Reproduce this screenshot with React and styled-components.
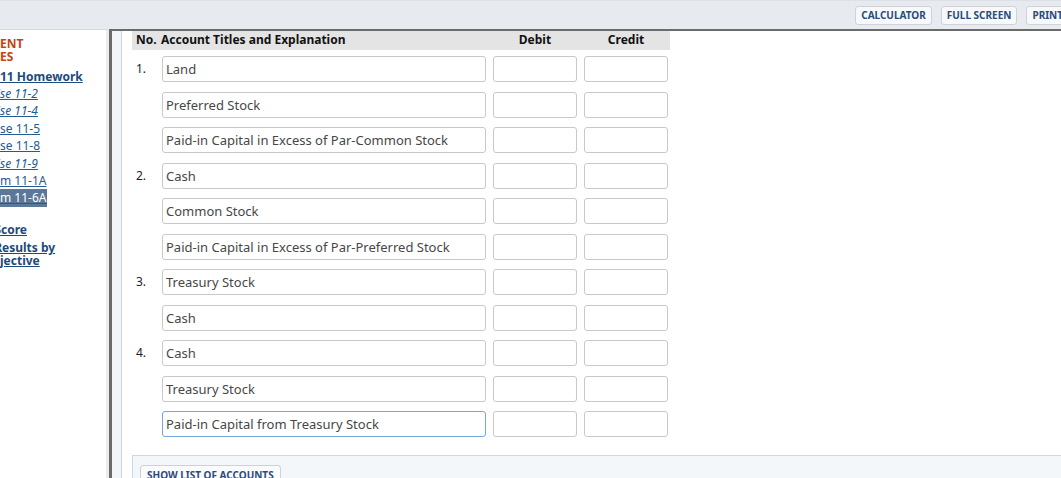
import React from "react";
import styled, { createGlobalStyle } from "styled-components";

const GlobalStyle = createGlobalStyle`
  html, body {
    margin: 0;
    overflow: hidden;
    background: #ffffff;
    font-family: "Noto Sans", "DejaVu Sans", sans-serif;
  }
  * { box-sizing: border-box; }
`;

const entries = [
  { no: "1.", lines: ["Land", "Preferred Stock", "Paid-in Capital in Excess of Par-Common Stock"] },
  { no: "2.", lines: ["Cash", "Common Stock", "Paid-in Capital in Excess of Par-Preferred Stock"] },
  { no: "3.", lines: ["Treasury Stock", "Cash"] },
  { no: "4.", lines: ["Cash", "Treasury Stock", "Paid-in Capital from Treasury Stock"] },
];

const links = [
  { hidden: "Exerci", shown: "se 11-2", italic: true },
  { hidden: "Exerci", shown: "se 11-4", italic: true },
  { hidden: "Exerci", shown: "se 11-5" },
  { hidden: "Exerci", shown: "se 11-8" },
  { hidden: "Exerci", shown: "se 11-9", italic: true },
  { hidden: "Proble", shown: "m 11-1A" },
  { hidden: "Proble", shown: "m 11-6A", active: true },
];

// a sidebar line scrolled sideways: the hidden start of the text hangs off the left edge
function Cut({ hidden, shift, children }) {
  return (
    <CutLine $shift={shift}>
      <Hidden><span>{hidden}</span></Hidden>
      {children}
    </CutLine>
  );
}

export default function App() {
  const last = entries.length - 1;
  return (
    <>
      <GlobalStyle />
      <Page>
        <TopBar>
          <ToolButton>CALCULATOR</ToolButton>
          <ToolButton>FULL SCREEN</ToolButton>
          <ToolButton>PRINT</ToolButton>
        </TopBar>
        <Body>
          <Sidebar>
            <Heading>
              <Cut hidden="ASSIGNM">ENT</Cut>
              <Cut hidden="RESOURC">ES</Cut>
            </Heading>
            <BoldLink>
              <Cut hidden="Chapter ">11 Homework</Cut>
            </BoldLink>
            <LinkList>
              {links.map((l) => (
                <SubLink key={l.shown} $italic={l.italic}>
                  <Cut hidden={l.hidden}>
                    <LinkText $active={l.active}>{l.shown}</LinkText>
                  </Cut>
                </SubLink>
              ))}
            </LinkList>
            <ScoreLink>
              <Cut hidden="S" shift={1}>core</Cut>
            </ScoreLink>
            <ResultsLink>
              <Cut hidden="R" shift={2}>esults by</Cut>
              <Cut hidden="Ob">jective</Cut>
            </ResultsLink>
          </Sidebar>
          <Main>
            <Panel>
              <HeaderRow>
                <HeadCell>No.</HeadCell>
                <HeadCell $left>Account Titles and Explanation</HeadCell>
                <HeadCell $center>Debit</HeadCell>
                <HeadCell $center>Credit</HeadCell>
              </HeaderRow>
              <Entries>
                {entries.map((e, ei) =>
                  e.lines.map((line, li) => (
                    <Row key={`${ei}-${li}`}>
                      <Num>{li === 0 ? e.no : ""}</Num>
                      <Field
                        defaultValue={line}
                        $focused={ei === last && li === e.lines.length - 1}
                      />
                      <Field />
                      <Field />
                    </Row>
                  ))
                )}
              </Entries>
              <Footer>
                <FooterButton>SHOW LIST OF ACCOUNTS</FooterButton>
              </Footer>
            </Panel>
          </Main>
        </Body>
      </Page>
    </>
  );
}

const Page = styled.div`
  width: 1079px;
  height: 100vh;
  display: flex;
  flex-direction: column;
`;

const TopBar = styled.div`
  height: 29px;
  flex: none;
  background: #e7ebef;
  border-top: 1px solid #dbe1e7;
  display: flex;
  justify-content: flex-end;
  align-items: center;
  gap: 9px;
  padding-right: 10px;
`;

const ToolButton = styled.button`
  height: 19px;
  padding: 0 5px;
  border: 1px solid #ccd3db;
  border-radius: 3px;
  background: #f6f8fa;
  color: #2b4b7b;
  font-family: "Noto Sans", sans-serif;
  font-size: 10px;
  font-weight: 700;
  line-height: 17px;
`;

const Body = styled.div`
  flex: 1;
  display: flex;
  min-height: 0;
`;

const Sidebar = styled.div`
  width: 109px;
  flex: none;
  background: #ffffff;
  border-top: 1px solid #d8d8d8;
  border-right: 3px solid #ececec;
  overflow: hidden;
  padding-top: 7px;
  white-space: nowrap;
  font-size: 12px;
`;

const CutLine = styled.div`
  display: flex;
  padding-left: ${(p) => p.$shift || 0}px;
`;

const Hidden = styled.span`
  width: 0;
  display: flex;
  justify-content: flex-end;
  white-space: nowrap;
`;

const Heading = styled.div`
  color: #c9420f;
  font-weight: 700;
  line-height: 13px;
`;

const BoldLink = styled.div`
  margin-top: 5px;
  color: #1d4a7c;
  font-weight: 700;
  line-height: 17px;
  text-decoration: underline;
`;

const LinkList = styled.div`
  display: flex;
  flex-direction: column;
`;

const SubLink = styled.div`
  height: 17.4px;
  line-height: 17.4px;
  color: #245b92;
  font-style: ${(p) => (p.$italic ? "italic" : "normal")};
  text-decoration: underline;
`;

const LinkText = styled.span`
  background: ${(p) => (p.$active ? "#5b7899" : "transparent")};
  color: ${(p) => (p.$active ? "#ffffff" : "inherit")};
  padding-right: ${(p) => (p.$active ? "1px" : "0")};
`;

const ScoreLink = styled.div`
  margin-top: 14px;
  color: #1d4a7c;
  font-weight: 700;
  line-height: 17px;
  text-decoration: underline;
`;

const ResultsLink = styled.div`
  margin-top: 3px;
  color: #1d4a7c;
  font-weight: 700;
  line-height: 13px;
  text-decoration: underline;
`;

const Main = styled.div`
  flex: 1;
  display: flex;
  background: #f3f6f9;
  border-top: 2px solid #6b6b6b;
  border-left: 3px solid #6b6b6b;
  padding-left: 9px;
  min-width: 0;
`;

const Panel = styled.div`
  flex: 1;
  background: #ffffff;
  border-left: 1px solid #cbd6e1;
  padding-left: 10px;
  display: flex;
  flex-direction: column;
  min-height: 0;
`;

const columns = "23px 324px 84px 84px";

const HeaderRow = styled.div`
  flex: none;
  width: 538px;
  height: 19px;
  padding-bottom: 2px;
  background: #e4e4e4;
  display: grid;
  grid-template-columns: ${columns};
  column-gap: 7px;
  align-items: center;
`;

const HeadCell = styled.div`
  font-size: 12px;
  font-weight: 700;
  color: #111111;
  line-height: 16px;
  padding-left: ${(p) => (p.$left || p.$center ? "0" : "4px")};
  margin-left: ${(p) => (p.$left ? "-1px" : "0")};
  text-align: ${(p) => (p.$center ? "center" : "left")};
`;

const Entries = styled.div`
  flex: none;
  padding-top: 6px;
  display: flex;
  flex-direction: column;
  gap: 9.5px;
`;

const Row = styled.div`
  display: grid;
  grid-template-columns: ${columns};
  column-gap: 7px;
  align-items: start;
`;

const Num = styled.div`
  padding: 5px 0 0 4px;
  font-size: 12px;
  line-height: 16px;
  color: #1b1b2b;
`;

const Field = styled.input`
  height: 26px;
  width: 100%;
  margin: 0;
  padding: 0 3px;
  border: 1px solid ${(p) => (p.$focused ? "#79a6d9" : "#c9c9c9")};
  border-radius: 3px;
  background: #ffffff;
  color: #474747;
  font-family: "Noto Sans", sans-serif;
  font-size: 13px;
  outline: none;
`;

const Footer = styled.div`
  flex: 1 0 auto;
  margin-top: 18px;
  background: #f4f7fa;
  border-top: 1px solid #cfd9e3;
  border-left: 1px solid #cfd9e3;
  padding: 6px 7px;
`;

const FooterButton = styled.button`
  height: 20px;
  padding: 0 6px;
  border: 1px solid #cbd2da;
  border-radius: 3px;
  background: #fafbfc;
  color: #2b4b7b;
  font-family: "Noto Sans", sans-serif;
  font-size: 10px;
  font-weight: 700;
  line-height: 16px;
`;
